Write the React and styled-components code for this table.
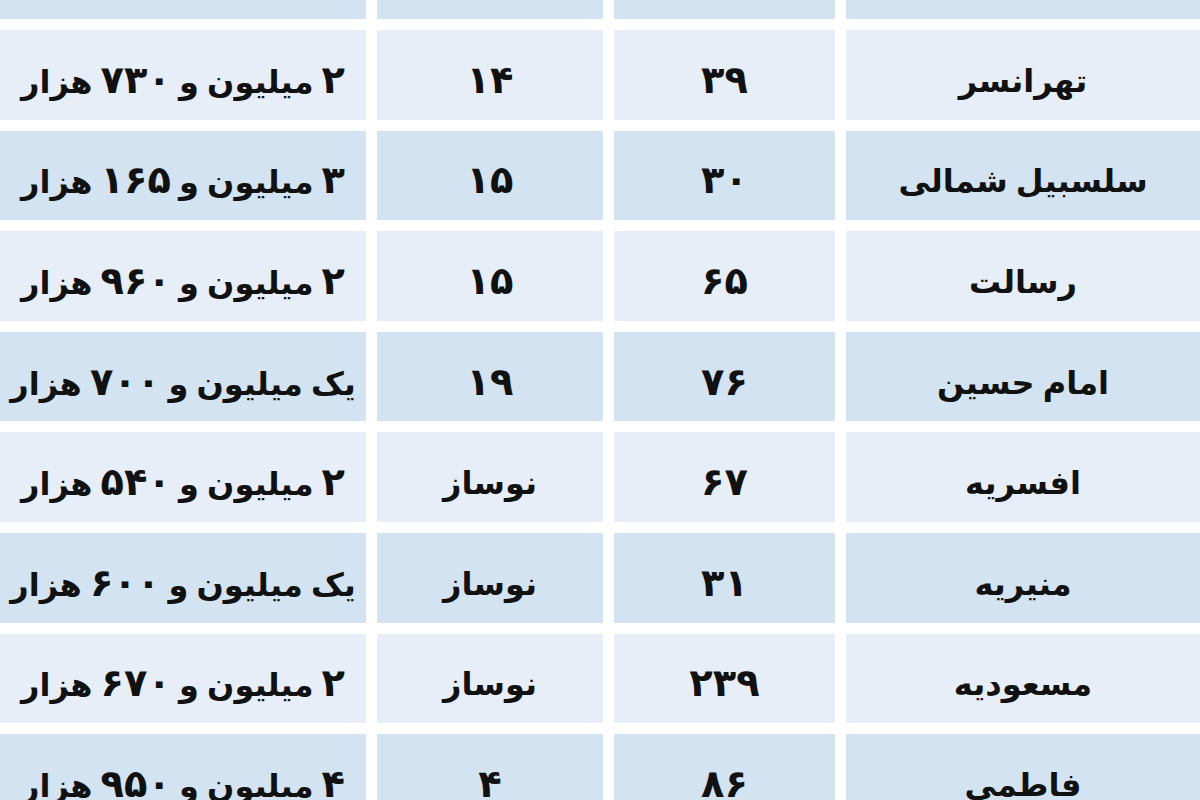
import React from "react";
import styled, { createGlobalStyle } from "styled-components";

const Global = createGlobalStyle`
  html, body { margin: 0; padding: 0; background: #ffffff; }
  body { width: 1200px; height: 800px; overflow: hidden; }
`;

const Table = styled.div`
  display: grid;
  direction: ltr;
  grid-template-columns: 366px 226px 221px 354px;
  grid-template-rows: 19px repeat(8, 89.6px);
  column-gap: 11px;
  row-gap: 11px;
  width: 1200px;
  background: #ffffff;
`;

const Cell = styled.div`
  display: flex;
  align-items: center;
  justify-content: center;
  overflow: hidden;
  background: ${(p) => (p.$shade ? "#d3e3f2" : "#e7eef8")};
  color: #111111;
  font-family: "DejaVu Sans", "Noto Sans", sans-serif;
  font-weight: bold;
  font-size: 32px;
  white-space: nowrap;
  direction: rtl;
  padding-top: 12px;
  box-sizing: border-box;
`;

const Label = styled.span`
  display: inline-block;
  white-space: pre;
  word-spacing: -3px;
`;

const Num = styled.span`
  font-size: 1.2em;
  line-height: 1;
`;

const isDigits = (s) => /^[۰-۹]+$/.test(s);

function renderText(t) {
  const parts = t.split(/([۰-۹]+)/);
  return parts.map((p, k) => (isDigits(p) ? <Num key={k}>{p}</Num> : p));
}

const rows = [
  ["", "", "", ""],
  ["۲ میلیون و ۷۳۰ هزار", "۱۴", "۳۹", "تهرانسر"],
  ["۳ میلیون و ۱۶۵ هزار", "۱۵", "۳۰", "سلسبیل شمالی"],
  ["۲ میلیون و ۹۶۰ هزار", "۱۵", "۶۵", "رسالت"],
  ["یک میلیون و ۷۰۰ هزار", "۱۹", "۷۶", "امام حسین"],
  ["۲ میلیون و ۵۴۰ هزار", "نوساز", "۶۷", "افسریه"],
  ["یک میلیون و ۶۰۰ هزار", "نوساز", "۳۱", "منیریه"],
  ["۲ میلیون و ۶۷۰ هزار", "نوساز", "۲۳۹", "مسعودیه"],
  ["۴ میلیون و ۹۵۰ هزار", "۴", "۸۶", "فاطمی"],
];

export default function App() {
  return (
    <>
      <Global />
      <Table>
        {rows.map((r, i) =>
          r.map((t, j) => (
            <Cell key={`${i}-${j}`} $shade={i % 2 === 0}>
              <Label>{renderText(t)}</Label>
            </Cell>
          ))
        )}
      </Table>
    </>
  );
}
